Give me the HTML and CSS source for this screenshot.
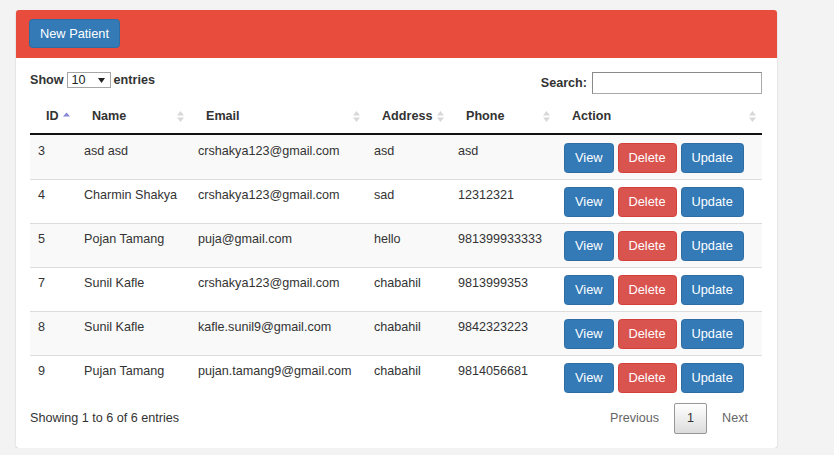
FILE: index.html
```html
<!DOCTYPE html>
<html>
<head>
<meta charset="utf-8">
<link rel="stylesheet" href="styles.css">
</head>
<body>
<div class="card">
  <div class="card-head">
    <button class="btn btn-primary btn-new">New Patient</button>
  </div>
  <div class="card-body">
    <div class="controls">
      <label class="length">Show <span class="fake-select"><span>10</span><svg width="7" height="5" viewBox="0 0 7 5"><path d="M0 0h7L3.5 5z" fill="#222"/></svg></span> entries</label>
      <label class="search">Search: <input type="search" class="search-input"></label>
    </div>
    <table class="dt">
      <colgroup>
        <col style="width:46px"><col style="width:114px"><col style="width:176px"><col style="width:84px"><col style="width:106px"><col style="width:206px">
      </colgroup>
      <thead>
        <tr>
          <th><div class="th-in"><span>ID</span><svg class="sort" width="7" height="11" viewBox="0 0 7 11"><path d="M3.5 1.5L7 5.5H0z" fill="#8484d9"/></svg></div></th>
          <th><div class="th-in"><span>Name</span><svg class="sort" width="7" height="11" viewBox="0 0 7 11"><path d="M3.5 0L7 4.5H0z M0 6.5h7L3.5 11z" fill="#d8d8d8"/></svg></div></th>
          <th><div class="th-in"><span>Email</span><svg class="sort" width="7" height="11" viewBox="0 0 7 11"><path d="M3.5 0L7 4.5H0z M0 6.5h7L3.5 11z" fill="#d8d8d8"/></svg></div></th>
          <th><div class="th-in"><span>Address</span><svg class="sort" width="7" height="11" viewBox="0 0 7 11"><path d="M3.5 0L7 4.5H0z M0 6.5h7L3.5 11z" fill="#d8d8d8"/></svg></div></th>
          <th><div class="th-in"><span>Phone</span><svg class="sort" width="7" height="11" viewBox="0 0 7 11"><path d="M3.5 0L7 4.5H0z M0 6.5h7L3.5 11z" fill="#d8d8d8"/></svg></div></th>
          <th><div class="th-in"><span>Action</span><svg class="sort" width="7" height="11" viewBox="0 0 7 11"><path d="M3.5 0L7 4.5H0z M0 6.5h7L3.5 11z" fill="#d8d8d8"/></svg></div></th>
        </tr>
      </thead>
      <tbody>
        <tr class="odd"><td>3</td><td>asd asd</td><td>crshakya123@gmail.com</td><td>asd</td><td>asd</td><td><div class="acts"><button class="btn btn-primary">View</button><button class="btn btn-danger">Delete</button><button class="btn btn-primary">Update</button></div></td></tr>
        <tr><td>4</td><td>Charmin Shakya</td><td>crshakya123@gmail.com</td><td>sad</td><td>12312321</td><td><div class="acts"><button class="btn btn-primary">View</button><button class="btn btn-danger">Delete</button><button class="btn btn-primary">Update</button></div></td></tr>
        <tr class="odd"><td>5</td><td>Pojan Tamang</td><td>puja@gmail.com</td><td>hello</td><td>981399933333</td><td><div class="acts"><button class="btn btn-primary">View</button><button class="btn btn-danger">Delete</button><button class="btn btn-primary">Update</button></div></td></tr>
        <tr><td>7</td><td>Sunil Kafle</td><td>crshakya123@gmail.com</td><td>chabahil</td><td>9813999353</td><td><div class="acts"><button class="btn btn-primary">View</button><button class="btn btn-danger">Delete</button><button class="btn btn-primary">Update</button></div></td></tr>
        <tr class="odd"><td>8</td><td>Sunil Kafle</td><td>kafle.sunil9@gmail.com</td><td>chabahil</td><td>9842323223</td><td><div class="acts"><button class="btn btn-primary">View</button><button class="btn btn-danger">Delete</button><button class="btn btn-primary">Update</button></div></td></tr>
        <tr><td>9</td><td>Pujan Tamang</td><td>pujan.tamang9@gmail.com</td><td>chabahil</td><td>9814056681</td><td><div class="acts"><button class="btn btn-primary">View</button><button class="btn btn-danger">Delete</button><button class="btn btn-primary">Update</button></div></td></tr>
      </tbody>
    </table>
    <div class="footer">
      <div class="info">Showing 1 to 6 of 6 entries</div>
      <div class="paginate">
        <span class="pbtn disabled">Previous</span>
        <span class="pbtn current">1</span>
        <span class="pbtn disabled">Next</span>
      </div>
    </div>
  </div>
</div>
</body>
</html>
```

FILE: styles.css
```css
* { box-sizing: border-box; }
html, body { margin: 0; padding: 0; }
body {
  background: #f3f3f3;
  font-family: "Liberation Sans", Arial, sans-serif;
  font-size: 12.6px;
  color: #333;
  padding: 10px 0 0 16px;
}
.card {
  width: 761px;
  background: #fff;
  border-radius: 3px;
  box-shadow: 0 1px 2px rgba(0,0,0,0.18);
  overflow: hidden;
}
.card-head {
  background: #e74c3c;
  height: 48px;
  padding: 9px 13px;
}
.btn {
  font-family: "Liberation Sans", Arial, sans-serif;
  font-size: 12.8px;
  line-height: 18px;
  height: 30px;
  padding: 5px 10px;
  border: 1px solid transparent;
  border-radius: 3.5px;
  color: #fff;
  cursor: pointer;
  margin: 0;
}
.btn-primary { background: #337ab7; border-color: #2e6da4; }
.btn-danger { background: #d9534f; border-color: #d43f3a; }
.btn-new { height: 29px; padding: 4px 10px; }
.card-body {
  padding: 14px 15px 14px 14px;
}
.controls {
  display: flex;
  justify-content: space-between;
  align-items: flex-start;
  height: 22px;
}
.length, .search {
  font-weight: bold;
  display: flex;
  align-items: center;
  gap: 3px;
}
.length { height: 16px; }
.search { height: 22px; gap: 5px; }
.fake-select {
  display: inline-flex;
  align-items: center;
  justify-content: space-between;
  width: 44px;
  height: 16px;
  border: 1px solid #a6a6a6;
  padding: 0 5px 0 4px;
  font-weight: normal;
  color: #222;
  background: #fff;
  font-size: 12.6px;
}
.search-input {
  width: 170px;
  height: 22px;
  border: 1px solid #a9a9a9;
  border-top-color: #8a8a8a;
  border-left-color: #8a8a8a;
  padding: 1px 3px;
  margin: 0;
  font: inherit;
  font-weight: normal;
}
.dt {
  width: 732px;
  border-collapse: collapse;
  table-layout: fixed;
  margin-top: 6px;
}
.dt th {
  text-align: left;
  font-weight: bold;
  padding: 7px 6px 8px 16px;
  line-height: 18px;
  border-bottom: 2px solid #111;
}
.th-in {
  display: flex;
  justify-content: space-between;
  align-items: center;
}
.sort { display: block; }
.dt td {
  padding: 7px 8px 6px 8px;
  line-height: 16px;
  border-top: 1px solid #ddd;
  vertical-align: top;
  height: 44px;
  white-space: nowrap;
}
.dt tbody tr:first-child td { border-top: 0; height: 44px; padding-top: 8px; }
.dt tr.odd td { background: #f9f9f9; }
.acts {
  display: flex;
  gap: 4px;
}
.footer {
  display: flex;
  justify-content: space-between;
  align-items: center;
  padding-top: 3px;
}
.paginate {
  display: flex;
  align-items: center;
  margin-right: 1px;
}
.pbtn {
  display: inline-block;
  padding: 6px 12px;
  line-height: 17px;
  border: 1px solid transparent;
  border-radius: 2px;
  margin-left: 2px;
  color: #666;
}
.pbtn.current {
  color: #333;
  border-color: #979797;
  background: linear-gradient(to bottom, #fff 0%, #dcdcdc 100%);
}
```
